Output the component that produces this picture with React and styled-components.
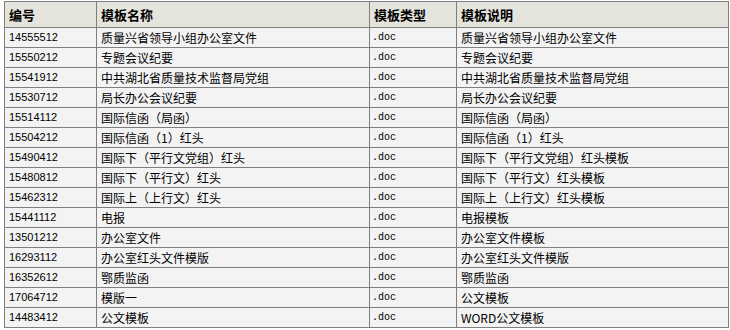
import styled, { createGlobalStyle } from 'styled-components'

const GlobalStyle = createGlobalStyle`
    html, body {
        margin: 0;
        padding: 0;
        background: #ffffff;
    }
`

const Page = styled.div`
    padding: 1px 0 0 4px;
`

const Table = styled.table`
    border-collapse: collapse;
    table-layout: fixed;
    width: 724px;
    font-family: "Liberation Sans", "Noto Sans CJK SC", sans-serif;
    color: #000;
`

const HeadCell = styled.th`
    height: 25px;
    padding: 0 0 0 4px;
    text-align: left;
    font-size: 13px;
    font-weight: bold;
    font-family: "Noto Sans CJK SC", sans-serif;
    background: #e4e3dc;
    border: 1px solid #7f7f7f;
    line-height: 25px;
`

const Cell = styled.td`
    height: 19px;
    padding: 0 0 0 ${p => (p.$mono ? 2 : 4)}px;
    font-size: ${p => (p.$mono ? 10 : p.$num ? 11 : 12)}px;
    font-family: ${p => (p.$mono
		? '"Liberation Mono", monospace'
		: p.$num
			? '"Liberation Sans", sans-serif'
			: '"Noto Sans CJK SC", sans-serif')};
    background: #f3f3f3;
    border: 1px solid #7f7f7f;
    line-height: 19px;
    white-space: nowrap;
    overflow: hidden;
`

const rows = [
	['14555512', '质量兴省领导小组办公室文件', '质量兴省领导小组办公室文件'],
	['15550212', '专题会议纪要', '专题会议纪要'],
	['15541912', '中共湖北省质量技术监督局党组', '中共湖北省质量技术监督局党组'],
	['15530712', '局长办公会议纪要', '局长办公会议纪要'],
	['15514112', '国际信函（局函）', '国际信函（局函）'],
	['15504212', '国际信函（1）红头', '国际信函（1）红头'],
	['15490412', '国际下（平行文党组）红头', '国际下（平行文党组）红头模板'],
	['15480812', '国际下（平行文）红头', '国际下（平行文）红头模板'],
	['15462312', '国际上（上行文）红头', '国际上（上行文）红头模板'],
	['15441112', '电报', '电报模板'],
	['13501212', '办公室文件', '办公室文件模板'],
	['16293112', '办公室红头文件模版', '办公室红头文件模版'],
	['16352612', '鄂质监函', '鄂质监函'],
	['17064712', '模版一', '公文模板'],
	['14483412', '公文模板', 'WORD公文模板'],
]

export default function App() {
	return (
		<Page>
			<GlobalStyle />
			<Table>
				<colgroup>
					<col style={{ width: 92 }} />
					<col style={{ width: 273 }} />
					<col style={{ width: 87 }} />
					<col style={{ width: 272 }} />
				</colgroup>
				<thead>
					<tr>
						<HeadCell>编号</HeadCell>
						<HeadCell>模板名称</HeadCell>
						<HeadCell>模板类型</HeadCell>
						<HeadCell>模板说明</HeadCell>
					</tr>
				</thead>
				<tbody>
					{rows.map(([id, name, note]) => (
						<tr key={id}>
							<Cell $num>{id}</Cell>
							<Cell>{name}</Cell>
							<Cell $mono>.doc</Cell>
							<Cell>{note}</Cell>
						</tr>
					))}
				</tbody>
			</Table>
		</Page>
	)
}
